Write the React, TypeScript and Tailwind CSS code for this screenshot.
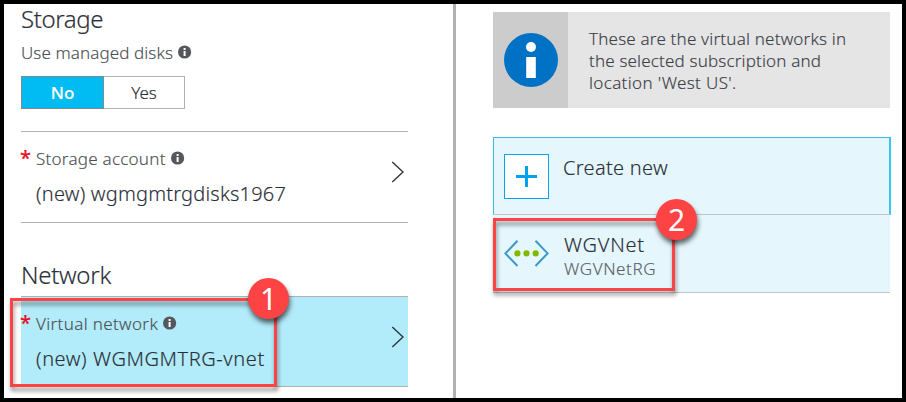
import type { ReactNode } from "react";

function InfoDot() {
  return (
    <svg width="14" height="14" viewBox="0 0 14 14" className="mt-[2.5px] ml-[5px] shrink-0">
      <circle cx="6.6" cy="7" r="6.6" fill="#54585d" />
      <rect x="5.6" y="3" width="2" height="2" fill="#fff" />
      <rect x="5.6" y="6" width="2" height="5" fill="#fff" />
    </svg>
  );
}

function Chevron({ className = "" }: { className?: string }) {
  return (
    <svg width="13" height="22" viewBox="0 0 13 22" fill="none" className={`shrink-0 ${className}`}>
      <path d="M1.3 1 L12 11 L1.3 21" stroke="#2f353c" strokeWidth="1.4" />
    </svg>
  );
}

function VNetIcon() {
  return (
    <svg width="45" height="45" viewBox="0 0 45 45" fill="none" className="shrink-0">
      <path d="M13.5 9.8 L1.4 22.4 L13.5 35" stroke="#3999c6" strokeWidth="2" />
      <path d="M31.5 9.8 L43.6 22.4 L31.5 35" stroke="#3999c6" strokeWidth="2" />
      <circle cx="13.4" cy="22.4" r="3.1" fill="#7fba00" />
      <circle cx="22.5" cy="22.4" r="3.1" fill="#7fba00" />
      <circle cx="31.7" cy="22.4" r="3.1" fill="#7fba00" />
    </svg>
  );
}

function PickerRow({ label, value, className }: { label: ReactNode; value: ReactNode; className: string }) {
  return (
    <div className={`flex w-[387px] border-y border-[#b1b1b1] ${className}`}>
      <span className="mt-[14px] -ml-px h-6 w-[16px] shrink-0 text-[20px] leading-6 font-medium text-[#e81123]">*</span>
      <div className="flex flex-1 flex-col pt-4">
        <div className="flex h-[22px] items-start text-[17px] leading-[22px] text-[#4c5054]">
          {label}
          <InfoDot />
        </div>
        <div className="mt-[10px] h-7 text-[20px] leading-7 text-[#2b3038]">{value}</div>
      </div>
      <Chevron className="mt-[29px] mr-[4px]" />
    </div>
  );
}

function Callout({ n, className, badge }: { n: number; className: string; badge: string }) {
  return (
    <>
      <div className={`absolute border-3 border-[#fd4344] drop-shadow-[1px_4px_2px_rgba(0,0,0,0.45)] ${className}`} />
      <div
        className={`absolute flex size-[41px] items-center justify-center rounded-full bg-[#fd4344] text-[30px] leading-none font-normal text-white shadow-[1px_4px_5px_rgba(0,0,0,0.6)] [-webkit-text-stroke:0px] ${badge}`}
      >
        {n}
      </div>
    </>
  );
}

export default function App() {
  return (
    <div className="relative flex h-[402px] w-[906px] overflow-hidden border-4 border-black bg-white font-['Noto_Sans','Open_Sans',sans-serif] font-light whitespace-nowrap [-webkit-text-stroke:0.15px]">
      <section className="w-[449px] shrink-0 pt-[3px] pl-[17px]">
        <h2 className="h-6 text-[24px] leading-6 tracking-[-0.4px] text-[#2b3038]">Storage</h2>
        <div className="mt-[11px] flex h-[22px] items-start text-[17px] leading-[22px] text-[#4c5054]">
          <span className="tracking-[0.1px]">Use managed disks</span>
          <InfoDot />
        </div>
        <div className="mt-[12px] flex h-[33px] w-[164px] text-[17px] leading-[31px] text-[#2b3038]">
          <div className="w-[83px] border border-[#7f8a90] bg-[#00bcf2] text-center font-medium text-white">No</div>
          <div className="flex-1 border border-l-0 border-[#b1b1b1] text-center">Yes</div>
        </div>
        <PickerRow
          className="mt-[22px] h-[92px]"
          label={<span className="tracking-[0.25px]">Storage account</span>}
          value={<span className="tracking-[0.2px]">(new) wgmgmtrgdisks1967</span>}
        />
        <h2 className="mt-[40px] h-6 text-[24px] leading-6 tracking-[-0.3px] text-[#2b3038]">Network</h2>
        <PickerRow
          className="mt-[9px] h-[91px] bg-[#b2ebfa]"
          label={<span className="tracking-[0.35px]">Virtual network</span>}
          value={<span className="tracking-[0.57px]">(new) WGMGMTRG-vnet</span>}
        />
      </section>

      <section className="flex-1 border-l-3 border-[#b1b1b1] pt-2 pl-[37px]">
        <div className="flex h-24 w-[397px] bg-[#e5e5e5]">
          <div className="flex w-[75px] items-center justify-center bg-[#cccccc]">
            <svg width="54" height="54" viewBox="0 0 54 54">
              <circle cx="27" cy="27" r="27" fill="#0072c6" />
              <circle cx="27" cy="14" r="5" fill="#fff" />
              <rect x="22.2" y="24" width="9.6" height="21" fill="#fff" />
            </svg>
          </div>
          <p className="pt-4 pl-[21px] text-[17px] leading-[22px] text-[#3c4148]">
            <span className="block tracking-[0.2px]">These are the virtual networks in</span>
            <span className="block tracking-[0.17px]">the selected subscription and</span>
            <span className="block tracking-[0.35px]">location &apos;West US&apos;.</span>
          </p>
        </div>

        <div className="mt-[29px] flex h-[78px] w-[398px] border border-r-2 border-t-[#38b9e4] border-r-[#35c5f0] border-b-[#c3c5c8] border-l-[#38b9e4] bg-[#e5f7fd] pt-4 pl-[10px]">
          <div className="flex size-[45px] items-center justify-center border border-[#00a4ef] bg-white">
            <svg width="21" height="21" viewBox="0 0 21 21">
              <path d="M10.5 0 V21 M0 10.5 H21" stroke="#00a1f1" strokeWidth="3" />
            </svg>
          </div>
          <span className="pl-[14px] text-[20px] leading-7 tracking-[0.3px] text-[#2b3038]">Create new</span>
        </div>

        <div className="flex h-[78px] w-[397px] border-b border-[#c3c5c8] bg-[#e5f7fd] pt-4 pl-[11px]">
          <VNetIcon />
          <div className="pl-[15px]">
            <div className="h-7 text-[20px] leading-7 tracking-[0.75px] text-[#2b3038]">WGVNet</div>
            <div className="-mt-px text-[17px] leading-[22px] tracking-[0.6px] text-[#5c6168]">WGVNetRG</div>
          </div>
        </div>
      </section>

      <Callout n={1} className="top-[294px] left-[6px] h-[89px] w-[267px]" badge="top-[274px] left-[244px]" />
      <Callout n={2} className="top-[214px] left-[489px] h-[73px] w-[182px]" badge="top-[195px] left-[652px]" />
    </div>
  );
}
